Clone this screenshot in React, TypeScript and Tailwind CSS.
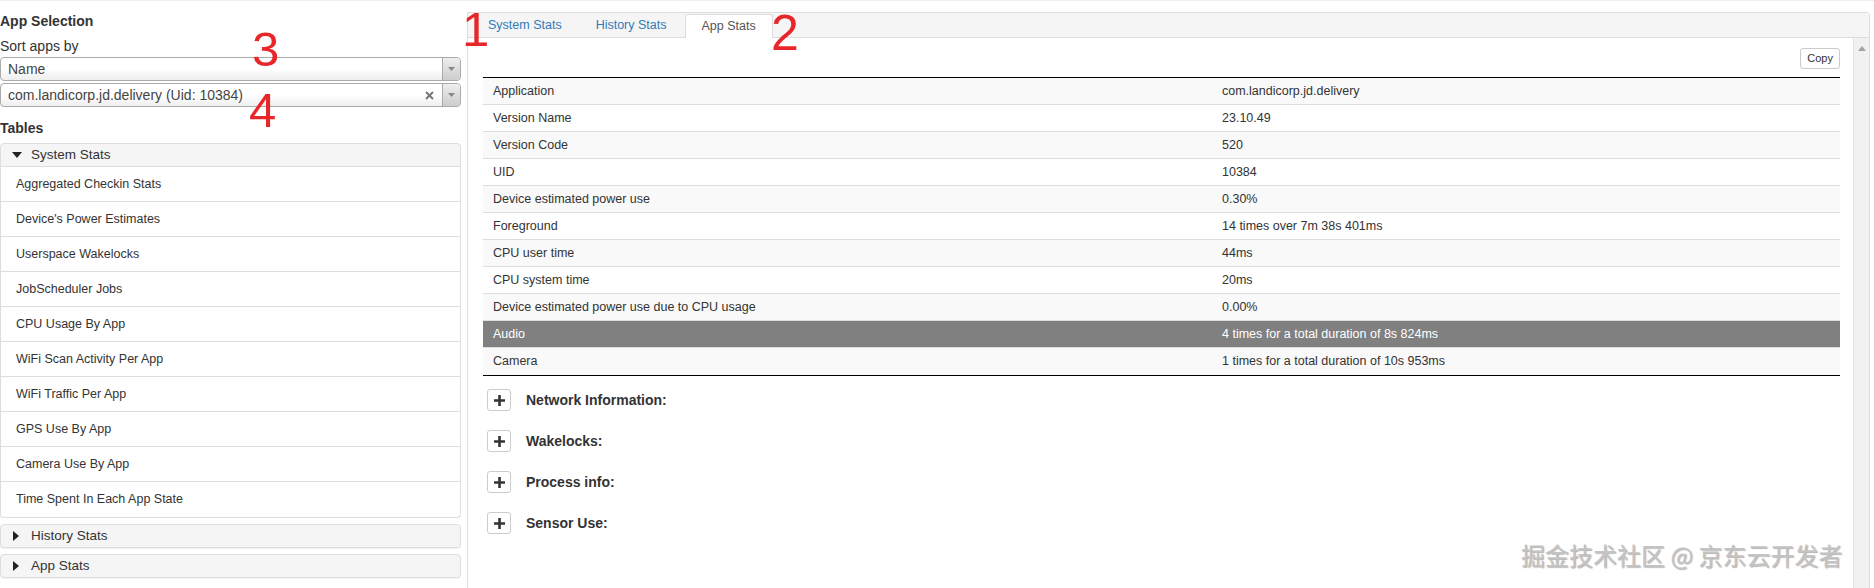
import React from 'react';

const tableItems = [
  'Aggregated Checkin Stats',
  "Device's Power Estimates",
  'Userspace Wakelocks',
  'JobScheduler Jobs',
  'CPU Usage By App',
  'WiFi Scan Activity Per App',
  'WiFi Traffic Per App',
  'GPS Use By App',
  'Camera Use By App',
  'Time Spent In Each App State',
];

const rows: [string, string][] = [
  ['Application', 'com.landicorp.jd.delivery'],
  ['Version Name', '23.10.49'],
  ['Version Code', '520'],
  ['UID', '10384'],
  ['Device estimated power use', '0.30%'],
  ['Foreground', '14 times over 7m 38s 401ms'],
  ['CPU user time', '44ms'],
  ['CPU system time', '20ms'],
  ['Device estimated power use due to CPU usage', '0.00%'],
  ['Audio', '4 times for a total duration of 8s 824ms'],
  ['Camera', '1 times for a total duration of 10s 953ms'],
];

const sections = ['Network Information:', 'Wakelocks:', 'Process info:', 'Sensor Use:'];

function ArrowBox() {
  return (
    <div className="w-[18px] h-full border-l border-[#aaa] bg-gradient-to-b from-[#eee] to-[#ccc] rounded-r-[4px] flex items-center justify-center">
      <svg width="7" height="4" viewBox="0 0 7 4">
        <path d="M0 0h7L3.5 4z" fill="#888" />
      </svg>
    </div>
  );
}

function Select({ value, clear }: { value: string; clear?: boolean }) {
  return (
    <div className="h-[24px] w-[461px] border border-[#aaa] rounded-[4px] bg-gradient-to-b from-white from-50% to-[#eee] flex items-center">
      <div className="flex-1 pl-[7px] text-[14px] leading-[22px] text-[#444] truncate">{value}</div>
      {clear && (
        <svg width="9" height="9" viewBox="0 0 9 9" className="mr-[8px]">
          <path d="M1 1l7 7M8 1L1 8" stroke="#777" strokeWidth="2" />
        </svg>
      )}
      <ArrowBox />
    </div>
  );
}

function Header({ label, open }: { label: string; open?: boolean }) {
  return (
    <div
      className={`h-[24px] bg-[#f5f5f5] border border-[#ddd] flex items-center text-[13.5px] text-[#333] ${
        open ? 'rounded-t-[4px]' : 'rounded-[4px] shadow-[0_1px_1px_rgba(0,0,0,0.05)]'
      }`}
    >
      <div className="w-[30px] flex items-center justify-center">
        {open ? (
          <svg width="10" height="6" viewBox="0 0 10 6" className="ml-[2px]">
            <path d="M0 0h10L5 6z" fill="#222" />
          </svg>
        ) : (
          <svg width="6" height="10" viewBox="0 0 6 10">
            <path d="M0 0l6 5-6 5z" fill="#222" />
          </svg>
        )}
      </div>
      <span>{label}</span>
    </div>
  );
}

function LeftPanel() {
  return (
    <div className="w-[461px] shrink-0 flex flex-col">
      <div className="mt-[12px] text-[14px] leading-[18px] font-bold text-[#333]">App Selection</div>
      <div className="mt-[7px] text-[14px] leading-[18px] text-[#333]">Sort apps by</div>
      <div className="mt-[2px]">
        <Select value="Name" />
      </div>
      <div className="mt-[2px]">
        <Select value="com.landicorp.jd.delivery (Uid: 10384)" clear />
      </div>
      <div className="mt-[12px] text-[14px] leading-[18px] font-bold text-[#333]">Tables</div>
      <div className="mt-[6px]">
        <Header label="System Stats" open />
        <div className="border-x border-b border-[#ddd] rounded-b-[4px]">
          {tableItems.map((t, i) => (
            <div
              key={t}
              className={`h-[35px] pl-[15px] flex items-center text-[12.5px] text-[#333] ${
                i < tableItems.length - 1 ? 'border-b border-[#ddd]' : ''
              }`}
            >
              {t}
            </div>
          ))}
        </div>
      </div>
      <div className="mt-[6px]">
        <Header label="History Stats" />
      </div>
      <div className="mt-[6px]">
        <Header label="App Stats" />
      </div>
    </div>
  );
}

function Tabs() {
  return (
    <div className="h-[25px] bg-[#f5f5f5] border-b border-[#ddd] flex items-end pl-[4px] gap-[2px] text-[12.5px]">
      <div className="h-[23px] px-[16px] flex items-center text-[#337ab7]">System Stats</div>
      <div className="h-[23px] px-[16px] flex items-center text-[#337ab7]">History Stats</div>
      <div className="h-[24px] -mb-px px-[16px] flex items-center text-[#555] bg-white border-x border-t border-[#ddd] rounded-t-[3px]">
        App Stats
      </div>
    </div>
  );
}

function StatsTable() {
  return (
    <div className="border-t border-b border-black">
      {rows.map(([k, v], i) => {
        const hi = k === 'Audio';
        const bg = hi ? 'bg-[#808080] text-white' : i % 2 === 0 ? 'bg-[#f9f9f9] text-[#333]' : 'bg-white text-[#333]';
        return (
          <div
            key={k}
            className={`flex h-[27px] items-center text-[12.5px] ${bg} ${
              i < rows.length - 1 ? 'border-b border-[#ddd]' : ''
            }`}
          >
            <div className="w-[729px] pl-[10px]">{k}</div>
            <div className="flex-1 pl-[10px]">{v}</div>
          </div>
        );
      })}
    </div>
  );
}

function PlusBox() {
  return (
    <div className="w-[24px] h-[22px] border border-[#ccc] rounded-[3px] bg-white flex items-center justify-center">
      <svg width="11" height="11" viewBox="0 0 11 11">
        <path d="M0 5.5h11M5.5 0v11" stroke="#333" strokeWidth="2.6" />
      </svg>
    </div>
  );
}

function RightPanel() {
  return (
    <div className="ml-[6px] mt-[12px] w-[1403px] border-l border-t border-r border-[#ddd] rounded-tr-[4px] flex flex-col">
      <Tabs />
      <div className="flex flex-1">
        <div className="flex-1 pl-[15px] pr-[13px]">
          <div className="mt-[10px] flex justify-end">
            <div className="h-[21px] px-[6px] border border-[#ccc] rounded-[3px] bg-white text-[11px] text-[#333] flex items-center">
              Copy
            </div>
          </div>
          <div className="mt-[8px]">
            <StatsTable />
          </div>
          <div className="mt-[13px] flex flex-col gap-[19px] pl-[4px]">
            {sections.map((s) => (
              <div key={s} className="flex items-center gap-[15px]">
                <PlusBox />
                <span className="text-[14px] font-bold text-[#333]">{s}</span>
              </div>
            ))}
          </div>
        </div>
        <div className="w-[16px] bg-[#f1f1f1] border-l border-[#e6e6e6] flex justify-center">
          <svg width="8" height="5" viewBox="0 0 8 5" className="mt-[8px]">
            <path d="M0 5h8L4 0z" fill="#a3a3a3" />
          </svg>
        </div>
      </div>
    </div>
  );
}

export default function App() {
  return (
    <div
      className="relative w-[1874px] h-[588px] overflow-hidden bg-white flex"
      style={{ fontFamily: '"Liberation Sans", Arial, sans-serif' }}
    >
      <div className="absolute inset-x-0 top-0 h-px bg-[#eee]" />
      <LeftPanel />
      <RightPanel />

      <span className="absolute left-[462px] top-[5px] text-[49px] leading-[49px] text-[#e8262a]">1</span>
      <span className="absolute left-[771px] top-[8px] text-[50px] leading-[50px] text-[#e8262a]">2</span>
      <span className="absolute left-[252px] top-[25px] text-[49px] leading-[49px] text-[#e8262a]">3</span>
      <span className="absolute left-[249px] top-[86px] text-[49px] leading-[49px] text-[#e8262a]">4</span>

      <span
        className="absolute left-[1521px] top-[543px] text-[24px] leading-[24px] text-[#c4c4c4] whitespace-nowrap [text-shadow:1px_1px_1px_rgba(0,0,0,0.3)]"
        style={{ fontFamily: '"Noto Sans CJK SC", "Liberation Sans", sans-serif' }}
      >
        掘金技术社区 @ 京东云开发者
      </span>
    </div>
  );
}
